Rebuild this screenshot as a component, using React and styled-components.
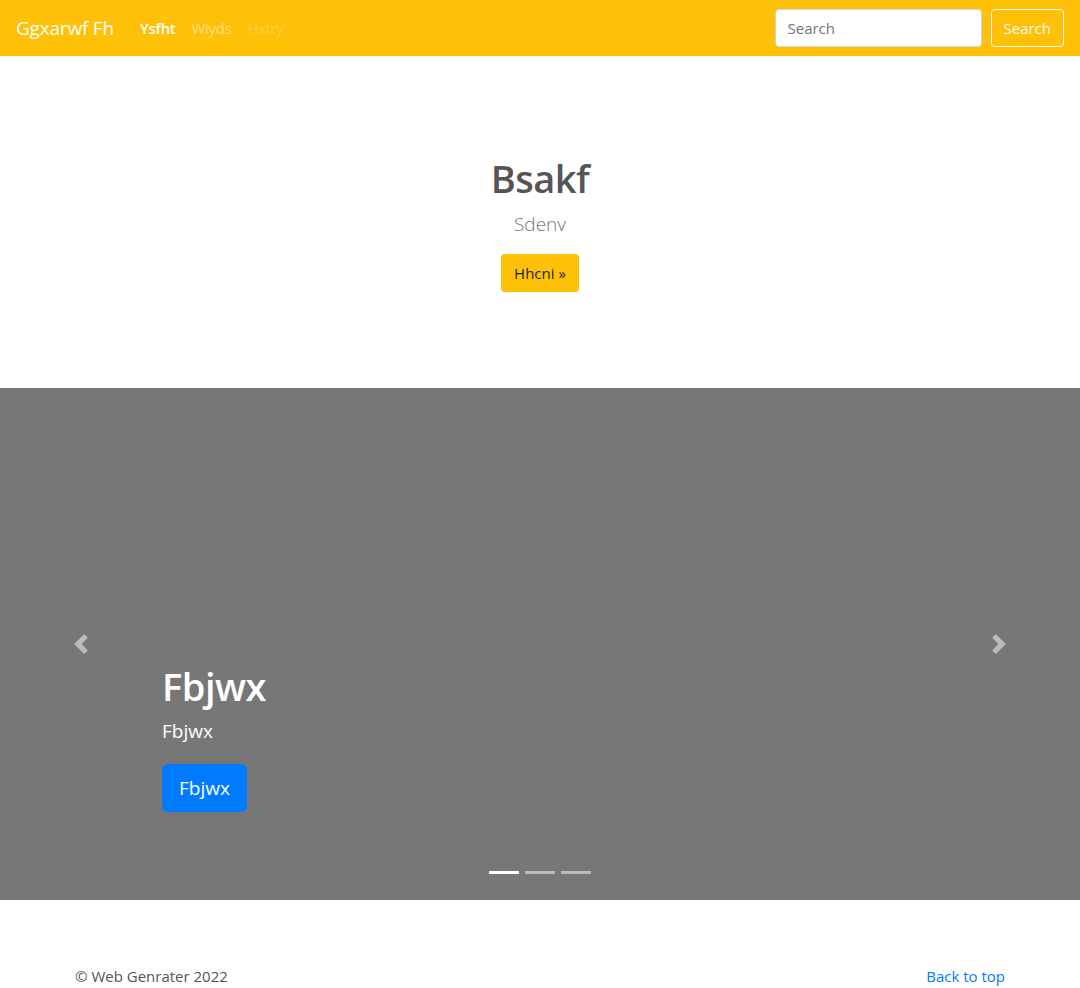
import React from "react";
import styled, { createGlobalStyle } from "styled-components";

const GlobalStyle = createGlobalStyle`
  * { box-sizing: border-box; }
  body {
    margin: 0;
    font-family: "Open Sans", "Noto Sans", sans-serif;
    font-size: 16px;
    line-height: 1.5;
    color: #212529;
    background: #fff;
  }
`;

const Navbar = styled.nav`
  height: 56px;
  background: #ffc107;
  display: flex;
  align-items: center;
  padding: 8px 16px;
`;

const Brand = styled.a`
  font-size: 19px;
  color: #fff;
  margin-right: 18px;
  letter-spacing: -0.2px;
`;

const NavList = styled.ul`
  display: flex;
  list-style: none;
  margin: 0;
  padding: 0;
  flex: 1;
`;

const NavLink = styled.li`
  padding: 0 8px;
  font-size: 15px;
  letter-spacing: -0.3px;
  color: ${(p) =>
    p.$state === "active"
      ? "#fff"
      : p.$state === "disabled"
      ? "rgba(255,255,255,.25)"
      : "rgba(255,255,255,.5)"};
  font-weight: ${(p) => (p.$state === "active" ? 600 : 400)};
`;

const SearchForm = styled.form`
  display: flex;
  gap: 9px;
  align-items: center;
`;

const SearchInput = styled.input`
  width: 207px;
  height: 38px;
  border: 1px solid #ced4da;
  border-radius: 4px;
  padding: 6px 12px;
  font: inherit;
  font-size: 15px;
  color: #495057;
  &::placeholder { color: #6c757d; }
`;

const OutlineButton = styled.button`
  height: 38px;
  padding: 0 12px;
  border: 1px solid #f8f9fa;
  border-radius: 4px;
  background: transparent;
  color: #f8f9fa;
  font: inherit;
  font-size: 15px;
`;

const Hero = styled.section`
  height: 332px;
  padding-top: 100px;
  text-align: center;
`;

const HeroTitle = styled.h1`
  margin: 0 0 8px;
  font-size: 38px;
  font-weight: 600;
  line-height: 1.2;
  color: #555;
  letter-spacing: -0.5px;
`;

const Lead = styled.p`
  margin: 0 0 16px;
  font-size: 19px;
  font-weight: 300;
  color: #6c757d;
  line-height: 1.5;
`;

const Button = styled.a`
  display: inline-block;
  background: ${(p) => p.$bg};
  color: ${(p) => p.$color};
  border-radius: ${(p) => (p.$lg ? "6px" : "4px")};
  padding: ${(p) => (p.$lg ? "8px 17px" : "6px 13px")};
  font-size: ${(p) => (p.$lg ? "19px" : "15px")};
  line-height: ${(p) => (p.$lg ? "32px" : "26px")};
  text-decoration: none;
`;

const Carousel = styled.div`
  position: relative;
  height: 512px;
  background: #777;
  overflow: hidden;
`;

const Control = styled.span`
  position: absolute;
  top: 0;
  bottom: 0;
  ${(p) => (p.$side === "prev" ? "left: 0;" : "right: 0;")}
  width: 15%;
  display: flex;
  align-items: center;
  justify-content: center;
  opacity: 0.5;
`;

const Caption = styled.div`
  position: absolute;
  left: 15%;
  right: 15%;
  bottom: 68px;
  padding: 20px 0;
  color: #fff;
  text-align: left;
`;

const CaptionTitle = styled.h1`
  margin: 0 0 9px;
  font-size: 38px;
  font-weight: 600;
  line-height: 1.2;
  letter-spacing: -0.5px;
`;

const CaptionText = styled.p`
  margin: 0 0 19px;
  font-size: 19px;
  line-height: 1.4;
`;

const Indicators = styled.ol`
  position: absolute;
  left: 0;
  right: 0;
  bottom: 26px;
  display: flex;
  justify-content: center;
  gap: 6px;
  list-style: none;
  margin: 0;
  padding: 0;
`;

const Indicator = styled.li`
  width: 30px;
  height: 3px;
  background: ${(p) => (p.$active ? "#fff" : "rgba(255,255,255,.5)")};
`;

const Footer = styled.footer`
  width: 960px;
  margin: 0 auto;
  padding: 65px 15px 0;
  display: flex;
  justify-content: space-between;
  font-size: 15px;
  color: #555;
`;

const FooterLink = styled.a`
  color: #007bff;
  text-decoration: none;
`;

const Chevron = ({ dir }) => (
  <svg width="20" height="20" viewBox="0 0 8 8" fill="#fff">
    {dir === "prev" ? (
      <path d="M5.25 0l-4 4 4 4 1.5-1.5L4.25 4l2.5-2.5L5.25 0z" />
    ) : (
      <path d="M2.75 0l-1.5 1.5L3.75 4l-2.5 2.5L2.75 8l4-4-4-4z" />
    )}
  </svg>
);

export default function App() {
  return (
    <>
      <GlobalStyle />
      <Navbar>
        <Brand>Ggxarwf Fh</Brand>
        <NavList>
          <NavLink $state="active">Ysfht</NavLink>
          <NavLink>Wiyds</NavLink>
          <NavLink $state="disabled">Hxlzy</NavLink>
        </NavList>
        <SearchForm onSubmit={(e) => e.preventDefault()}>
          <SearchInput placeholder="Search" />
          <OutlineButton>Search</OutlineButton>
        </SearchForm>
      </Navbar>

      <Hero>
        <HeroTitle>Bsakf</HeroTitle>
        <Lead>Sdenv</Lead>
        <Button $bg="#ffc107" $color="#212529">Hhcni »</Button>
      </Hero>

      <Carousel>
        <Control $side="prev"><Chevron dir="prev" /></Control>
        <Control $side="next"><Chevron dir="next" /></Control>
        <Caption>
          <CaptionTitle>Fbjwx</CaptionTitle>
          <CaptionText>Fbjwx</CaptionText>
          <Button $lg $bg="#007bff" $color="#fff">Fbjwx</Button>
        </Caption>
        <Indicators>
          <Indicator $active />
          <Indicator />
          <Indicator />
        </Indicators>
      </Carousel>

      <Footer>
        <span>© Web Genrater 2022</span>
        <FooterLink href="#">Back to top</FooterLink>
      </Footer>
    </>
  );
}
